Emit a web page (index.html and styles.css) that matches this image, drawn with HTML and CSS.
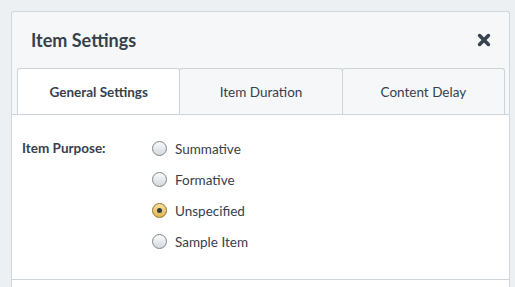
FILE: index.html
```html
<!DOCTYPE html>
<html lang="en">
<head>
    <meta charset="UTF-8">
    <title>Item Settings</title>
    <link rel="stylesheet" href="styles.css">
</head>
<body>
    <div class="dialog">
        <div class="dialog-header">
            <h1>Item Settings</h1>
            <button class="close-btn" aria-label="Close">
                <svg width="14" height="14" viewBox="0 0 14 14">
                    <path d="M2.6 2.6 L11.4 11.4 M11.4 2.6 L2.6 11.4" stroke="#37434e" stroke-width="3.6" stroke-linecap="round"/>
                </svg>
            </button>
        </div>

        <div class="tabs">
            <div class="tab active">General Settings</div>
            <div class="tab">Item Duration</div>
            <div class="tab">Content Delay</div>
        </div>

        <div class="tab-content">
            <div class="field">
                <div class="field-label">Item Purpose:</div>
                <div class="radio-list">
                    <label class="radio"><input type="radio" name="purpose"> Summative</label>
                    <label class="radio"><input type="radio" name="purpose"> Formative</label>
                    <label class="radio"><input type="radio" name="purpose" checked> Unspecified</label>
                    <label class="radio"><input type="radio" name="purpose"> Sample Item</label>
                </div>
            </div>
        </div>
        <div class="dialog-footer"></div>
    </div>
</body>
</html>
```

FILE: styles.css
```css
body {
    font-family: 'Lato', 'Open Sans', sans-serif;
    background-color: #edf0f3;
    margin: 0;
    padding: 11px 11px 0;
    color: #36414c;
}
.dialog {
    width: 497px;
    background-color: #f5f7f8;
    border: 1px solid #cfd6dd;
    border-bottom: none;
    border-radius: 3px 3px 0 0;
}
.dialog-header {
    height: 56px;
    display: flex;
    justify-content: space-between;
    align-items: center;
    padding: 0 19px;
}
.dialog-header h1 {
    margin: 0;
    font-size: 18px;
    font-weight: bold;
    color: #36414c;
}
.close-btn {
    background: none;
    border: none;
    padding: 0;
    margin-right: -1px;
    width: 14px;
    height: 14px;
    cursor: pointer;
}
.tabs {
    display: flex;
    padding: 0 4px 0 5px;
    height: 46px;
}
.tab {
    flex: 1;
    display: flex;
    align-items: center;
    justify-content: center;
    border: 1px solid #cdd4da;
    border-bottom: none;
    border-radius: 3px 3px 0 0;
    margin-left: -1px;
    font-size: 13.5px;
    color: #36414c;
    background-color: #f5f7f8;
}
.tab:first-child {
    margin-left: 0;
}
.tab.active {
    background-color: #fff;
    font-weight: bold;
    position: relative;
    z-index: 1;
}
.tab-content {
    background-color: #fff;
    border-top: 1px solid #cdd4da;
    border-bottom: 1px solid #cdd4da;
    padding: 18px 10px 22px;
}
.field {
    display: flex;
}
.field-label {
    width: 130px;
    font-size: 13.5px;
    font-weight: bold;
    line-height: 31px;
}
.radio-list {
    display: flex;
    flex-direction: column;
}
.radio {
    display: flex;
    align-items: center;
    height: 31px;
    font-size: 13.5px;
    color: #36414c;
}
.radio input {
    appearance: none;
    -webkit-appearance: none;
    width: 15px;
    height: 15px;
    margin: 0 8px 0 0;
    border: 1px solid #7e868d;
    border-radius: 50%;
    background: linear-gradient(#f9fafb, #d5d9dd);
    position: relative;
}
.radio input:checked {
    border-color: #8c7332;
    background: linear-gradient(#f9e09a, #e2b651);
}
.radio input:checked::after {
    content: '';
    position: absolute;
    left: 4px;
    top: 4px;
    width: 5px;
    height: 5px;
    border-radius: 50%;
    background-color: #333b44;
}
.dialog-footer {
    background-color: #fff;
    height: 7px;
}
```
